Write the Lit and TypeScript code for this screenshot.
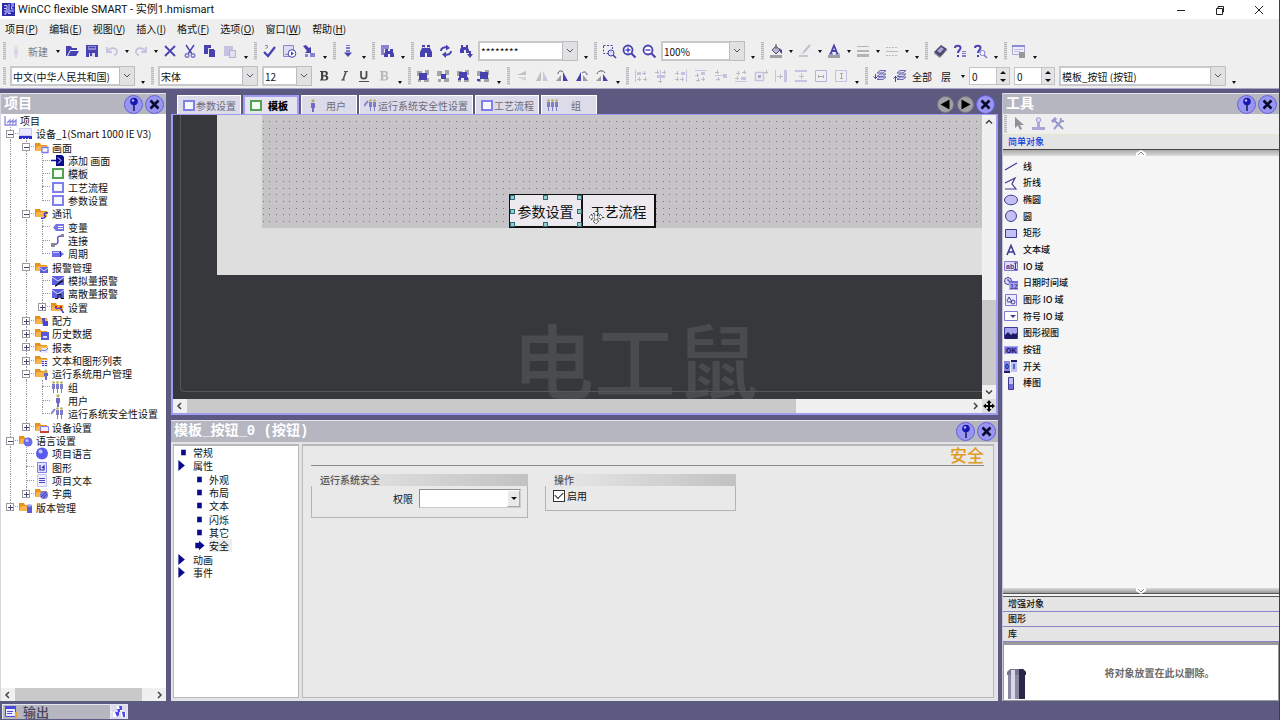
import { LitElement, html, svg, css, nothing } from "lit";
import { customElement, property } from "lit/decorators.js";
import { classMap } from "lit/directives/class-map.js";

const P = "#4842b0";
const D = "#c6c2e0";
const N = "#0a0a8c";

/* ---------- toolbar glyphs, 16 x 16 ---------- */
const binoculars = svg`<path fill=${P} d="M4 2h3v3h2V2h3v3l2 4v5H9v-4H7v4H2V9l2-4z"/><path fill="#fff" d="M4.500 4h2v1h-2zM9.500 4h2v1h-2z"/>`;
const plus = (x: number, y: number) => svg`<path stroke="#bdbbc8" d="M${x - 2} ${y}.5h4M${x}.5 ${y - 2}v4"/>`;
const stack = svg`<g fill="#dcd9f2" stroke="#6c68b4" stroke-width="1"><path d="M5 11.500l3-2.500h6l-3 2.500z"/><path d="M5 8.500l3-2.500h6l-3 2.500z"/><path d="M5 5l3-2.500h6l-3 2.500z"/></g>`;
const group = (a: any) => svg`<path fill="#a5a5a9" d="M2 3h5v5H2zM10 2h4v5h-4zM9 10h5v4H9zM3 11h3v3H3z"/><g fill=${P}>${a}</g>`;

const TB: Record<string, any> = {
  fresh: svg`<circle cx="8" cy="4" r="2" fill="#e9e2cf"/><path fill="#d8d4ea" d="M6 6h4v5H9v4H7v-4H6z"/>`,
  open: svg`<path fill=${P} d="M2 3h5l1 2h5v2H6l-3 6H2z"/><path fill=${P} d="M6.500 8H15l-3 5H4z"/>`,
  save: svg`<path fill=${P} d="M2 2h12v12H2z"/><path fill="#8a86d4" d="M4 3h8v4H4z"/><path fill="#dcdaf2" d="M5 10h6v4H5z"/><path fill=${P} d="M5 4h6v1H5zM6 10h2v3H6z"/>`,
  undo: svg`<path fill="none" stroke=${D} stroke-width="1.800" d="M3 4v5h5M3.500 8.500C6 4 12 4 13 8c.5 2-1 4-3 4"/>`,
  redo: svg`<path fill="none" stroke=${D} stroke-width="1.800" d="M13 4v5H8M12.500 8.500C10 4 4 4 3 8c-.5 2 1 4 3 4"/>`,
  del: svg`<path stroke=${P} stroke-width="1.800" d="M3 3l10 10M13 3L3 13"/>`,
  cut: svg`<path fill="none" stroke=${P} stroke-width="1.400" d="M4 2l6 9M12 2L6 11"/><g fill="none" stroke="#7d7ac6" stroke-width="1.400"><circle cx="5" cy="12.500" r="1.800"/><circle cx="11" cy="12.500" r="1.800"/></g>`,
  copy: svg`<path fill=${P} d="M2 2h7v9H2z"/><path fill=${P} stroke="#efefef" d="M6.500 5.500h5l2 2v7h-7z"/>`,
  paste: svg`<path fill=${D} d="M2 3h9v10H2z"/><path fill="#e2e0f0" stroke="#b5b2c8" d="M7.500 7.500h6v7h-6z"/>`,
  check: svg`<path fill="none" stroke=${P} stroke-width="2.200" d="M3 9l4 4 7-9"/><path fill="none" stroke="#8a88b8" d="M4 2.500h2.500v2L5 5v1"/>`,
  run: svg`<path fill="#dedcf4" stroke="#8a86d4" d="M2.500 2.500h10v11h-10z"/><path stroke="#8a86d4" d="M4 11.500h4"/><circle cx="11" cy="10.500" r="3.800" fill="#fff" stroke=${P}/><path fill=${P} d="M10 8.500l3 2-3 2z"/>`,
  transfer: svg`<path fill=${P} d="M2 3l3-1 3 3 2-1v6H4l2-2z"/><path fill="#8a86d4" d="M9 10h5v4H9zM4 11h3v3H4z"/>`,
  down: svg`<path fill="#7d79cc" d="M6 2h4v1H6zM6 4h4v2H6zM6 7h4v2H6z"/><path fill=${P} d="M4 9.500h8L8 14z"/>`,
  findrep: svg`<path fill="#8a86d4" d="M2 2h8v4H5v6H2z"/><path fill=${P} d="M6 6h3v2h2V6h3v3l1 2v3h-4v-3h-2v3H5v-3l1-2z"/>`,
  find: binoculars,
  refind: svg`<path fill="none" stroke=${P} stroke-width="2" d="M3 8c0-3 3-4 6-3.500M13 8c0 3-3 4-6 3.500"/><path fill=${P} d="M8 1.500L12 5 8 7.500zM8 8.500L4 11.500 8 15z"/>`,
  findnext: svg`<path fill=${P} d="M3 2h2v2h3V2h2v3l1 2v3H8V7H6v3H2V6l1-1z"/><path fill=${P} d="M11 8h2v3h2l-3 4-3-4h2z"/>`,
  zoomrect: svg`<path fill="none" stroke=${P} stroke-dasharray="2 1.500" d="M2.500 2.500h9v8h-9z"/><circle cx="10" cy="10" r="3" fill="#dedcf4" stroke=${P}/><path stroke=${P} stroke-width="1.600" d="M12 12l3 3"/>`,
  zoomin: svg`<circle cx="7" cy="7" r="4.500" fill="#fff" stroke=${P} stroke-width="1.800"/><path stroke=${P} stroke-width="2.200" d="M10.500 10.500l4 4"/><path stroke=${P} stroke-width="1.400" d="M4.500 7h5M7 4.500v5"/>`,
  zoomout: svg`<circle cx="7" cy="7" r="4.500" fill="#fff" stroke=${P} stroke-width="1.800"/><path stroke=${P} stroke-width="2.200" d="M10.500 10.500l4 4"/><path stroke=${P} stroke-width="1.400" d="M4.500 7h5"/>`,
  fill: svg`<path fill="#9f9fa6" d="M2 12h12v3H2z"/><path fill="#b8b6c8" stroke="#55546c" d="M4 7l4-4 4 4-4 4z"/><path fill=${P} d="M11 5l3 2v4l-2-2z"/><path stroke="#55546c" d="M8 1v5"/>`,
  pen: svg`<path fill="#c6c6cc" d="M2 12h9v2H2z"/><path stroke="#c0bed0" stroke-width="2" d="M6 10l7-8"/><path stroke="#dcd9c8" stroke-width="1.500" d="M4 11l3-2"/>`,
  fontcolor: svg`<path fill="#9f9fa6" d="M2 12h12v3H2z"/><path fill="none" stroke=${P} stroke-width="1.800" d="M4.500 11L8 2.500 11.500 11M5.500 8h5"/><path stroke=${P} d="M3 11h4M9.500 11h4"/>`,
  lines: svg`<path fill="#b4b4b8" d="M2 3h12v1H2zM2 7h12v2H2zM2 11h12v3H2z"/>`,
  dashes: svg`<path stroke="#bcbcc0" stroke-dasharray="2 1" d="M2 4.500h12M2 12.500h12"/><path fill="#bcbcc0" d="M2 8h12v1H2z"/>`,
  book: svg`<path fill="#4b486c" d="M2 9l7-7 6 4-7 8z"/><path fill="#a9a6d8" d="M5 8l4-4 3 2-4 4z"/><path fill="none" stroke="#77758e" d="M2 10l6 4.500 7-8"/>`,
  help1: svg`<path fill="none" stroke=${P} stroke-width="2" d="M3 5c0-3 5.500-3 5.500 0C8.500 7 6 7 6 10M6 12v2"/><path fill="#7d79cc" d="M10 8h4v1h-4zM10 10h4v1h-4zM10 12h4v2h-4z"/>`,
  help2: svg`<path fill="none" stroke=${P} stroke-width="2" d="M3 5c0-3 5.500-3 5.500 0C8.500 7 6 7 6 10M6 12v2"/><circle cx="10.500" cy="10" r="2.500" fill="#fff" stroke="#7d79cc"/><path stroke="#7d79cc" stroke-width="1.500" d="M12 12l3 3"/>`,
  props: svg`<path fill="#eef" stroke="#a9a7d4" d="M1.500 2.500h12v9h-12z"/><path fill="#8c89d6" d="M1 2h13v2H1z"/><path stroke="#c0bee4" d="M3 6.500h9M3 8.500h6"/><path fill="#98989c" d="M8 9h6v6H8z"/>`,
  bold: svg`<path fill="#404044" fill-rule="evenodd" d="M4 3h5.500c3 0 3 4 .8 4.600 3 .6 2.700 4.900-.8 4.900H4v-1h1V4H4zM7.200 4.200v3H9c1.200 0 1.200-3 0-3zm0 4.200v3H9c1.600 0 1.600-3 0-3z"/>`,
  italic: svg`<path stroke="#505054" stroke-width="1.600" d="M10 3.500L7 12"/><path stroke="#505054" d="M8 3.500h4M5 12h4"/>`,
  underline: svg`<path fill="none" stroke="#505054" stroke-width="1.800" d="M5 3v5c0 3.500 5.500 3.500 5.500 0V3"/><path stroke="#505054" d="M3 13.500h10"/>`,
  boldoff: svg`<path fill="#b8b8bc" fill-rule="evenodd" d="M4 3h5.500c3 0 3 4 .8 4.600 3 .6 2.700 4.900-.8 4.900H4v-1h1V4H4zM7.200 4.200v3H9c1.200 0 1.200-3 0-3zm0 4.200v3H9c1.600 0 1.600-3 0-3z"/>`,
  front: group(svg`<path d="M4 5h8v7H4z"/>`),
  frontone: group(svg`<path d="M6 6h5v5H6z"/>`),
  back: group(svg`<path d="M4 4h8v6H4zM9 9h4v3H9zM3 10h3v2H3z"/>`),
  backone: group(svg`<path d="M5 4h8v7H5zM2 11h3v2H2z"/>`),
  flipv: svg`<path fill="#c0c0c6" d="M3 7l9-4v4z"/><path fill="#d6d6da" d="M3 9h9v4z"/>`,
  fliph: svg`<path fill="#c0c0c6" d="M7 3v10H2z"/><path fill="#c9c6e2" d="M9 3l5 10H9z"/>`,
  rotr: svg`<path fill="#9a9aa0" d="M2 13l5-6v6z"/><path fill=${P} d="M9 4l5 9H9z"/><path fill="none" stroke="#55546c" d="M4 6c0-3 3-4 5-2"/>`,
  rotl: svg`<path fill=${P} d="M2 13l5-9v9z"/><path fill="#9a9aa0" d="M9 7l5 6H9z"/><path fill="none" stroke="#55546c" d="M13 7c0-3-3-4-5-2"/>`,
  rot180: svg`<path fill="#9a9aa0" d="M2 13l5-5v5z"/><path fill=${P} d="M9 6l5 7H9z"/><path fill="none" stroke="#55546c" d="M3 6c1-4 7-4 8-1"/>`,
  al: svg`<path fill=${D} d="M2 2h1v12H2zM4 4h4v3H4z"/>${plus(11, 5)}${plus(6, 11)}${plus(12, 11)}`,
  ac: svg`<path fill=${D} d="M4 7h8v3H4zM7 2h1v12H7z"/>${plus(4, 4)}${plus(11, 4)}${plus(7, 13)}`,
  ar: svg`<path fill=${D} d="M13 2h1v12h-1zM8 4h4v3H8z"/>${plus(4, 5)}${plus(4, 11)}${plus(9, 11)}`,
  at: svg`<path fill=${D} d="M2 2h12v1H2zM8 4h4v3H8z"/>${plus(4, 7)}${plus(5, 12)}${plus(10, 11)}`,
  am: svg`<path fill=${D} d="M10 6h4v4h-4zM2 7h12v1H2z"/>${plus(4, 4)}${plus(5, 11)}`,
  ab: svg`<path fill=${D} d="M2 13h12v1H2zM8 9h5v3H8z"/>${plus(5, 5)}${plus(11, 4)}${plus(4, 10)}`,
  ctr: svg`<path fill="none" stroke=${D} stroke-width="1.500" d="M2.500 4.500h8v8h-8z"/><path fill="#a9a6d6" d="M5 7h3v3H5z"/>${plus(13, 4)}`,
  dh: svg`<path fill=${D} d="M11 2h3v12h-3zM2 2h1v12H2z"/><path stroke="#bdbbc8" d="M4 8.500h6M7.500 6v5"/>`,
  dv: svg`<path fill=${D} d="M2 2h12v2H2zM2 12h12v2H2z"/><path stroke="#bdbbc8" d="M8.500 5v6M6 8.500h5"/>`,
  sw: svg`<path fill="none" stroke="#b5b2dc" d="M2.500 2.500h11v11h-11z"/><path stroke="#aaa" d="M5 8.500h6M5.500 7v3M10.500 7v3"/>`,
  sh: svg`<path fill="none" stroke="#c4c1e2" d="M2.500 2.500h11v11h-11z"/><path stroke="#aaa" d="M8.500 5v6M7 5.500h3M7 10.500h3"/>`,
  layerup: svg`${stack}<path fill="none" stroke=${P} d="M3.500 6v5M1.500 8.500l2 2 2-2"/>`,
  layerdn: svg`${stack}<path fill="none" stroke=${P} d="M3.500 8v6M1.500 10.500l2-2 2 2"/>`,
  cursor: svg`<path fill="#8f8f96" d="M5 1v11l3-2.500 2 4.500 2-1-2-4h4z"/>`,
  stamp: svg`<path fill="#a9a6d8" d="M2 11h13v3H2zM7 5h3v6H7z"/><circle cx="8.500" cy="4" r="2.300" fill="#dcdaf2" stroke="#a09dd4"/>`,
  tools: svg`<path stroke="#9a97cf" stroke-width="2" d="M4 4l9 9M12 4L4 13"/><path stroke="#9a97cf" stroke-width="3" d="M2 6l4-4"/><path fill="none" stroke="#9a97cf" stroke-width="2" d="M11 2c-1 3 0 4 3 3"/>`,
};

/* ---------- project tree glyphs, 14 x 13 ---------- */
const folder = (a: any) => svg`<path fill="#e8921c" d="M0 2h5l1 2h6v6H0z"/><path fill="#f7b64c" d="M2 5h11l-2 5H0z"/>${a}`;
const person = (x: number) => svg`<circle cx=${x + 1.5} cy="1.500" r="1.300" fill="#b5ae5a"/><path fill="#7f7cc8" d="M${x} 3h3v5h-1v4h-1v-4h-1z"/>`;
const screen = (c: string, f: string) => svg`<path fill=${f} stroke=${c} stroke-width="2" d="M2 2h10v9H2z"/>`;
const mail = svg`<path fill="#5d5de0" d="M1 2h12v9H1z"/><path fill="none" stroke="#dadaff" d="M1 3l6 4 6-4"/>`;
const TREE: Record<string, any> = {
  project: svg`<path fill="none" stroke="#8b89e0" stroke-width="1.300" d="M2 2v9h11V6l-3 3V6L7 9V6l-3 3"/>`,
  device: svg`<path fill="#e9e9ff" stroke="#c9c9f0" d="M.5 1.500h12v7H.5z"/><path fill="#2c2cc8" d="M0 9h13v3H0z"/><path stroke="#fff" d="M3 11.500h1M6 11.500h1M9 11.500h1"/>`,
  fScreen: folder(svg`<path fill="#fff" stroke="#7a7af0" stroke-width="1.300" d="M7 6.500h6v5H7z"/>`),
  add: svg`<path fill=${N} d="M5 1h6l2 2v9H5z"/><path stroke="#fff" fill="none" d="M7 3.500l3 3-3 3"/><path stroke=${N} stroke-width="1.500" d="M0 6.500h7"/>`,
  template: screen("#55a055", "#f3fff3"),
  screen: screen("#8080ea", "#f7f7ff"),
  fComm: folder(svg`<path fill="none" stroke="#3333cc" stroke-width="1.500" d="M13 6c-4-1-4 2-3 3s-1 3-4 2"/>`),
  tag: svg`<path fill="#7474e6" d="M5 3h8v7H5L2 6.500z"/><path stroke="#fff" d="M7 5.500h5M7 7.500h5"/>`,
  conn: svg`<path fill="none" stroke="#4c4cd0" stroke-width="1.400" d="M10 2C5 2 7 5 7 7s-1 4-4 3"/><path fill="#888" d="M10 0h3v3h-3zM0 9h4v4H0z"/>`,
  cycle: svg`<path fill="#6d6de8" d="M1 4h8l4 3-4 3H1z"/><path stroke="#c9c9ff" d="M2 5.500h6"/><path stroke="#2a2ab4" d="M9.500 4v6"/>`,
  fAlarm: folder(svg`<path fill="#5d5de0" d="M5 6h8v6H5z"/><path fill="none" stroke="#dadaff" d="M5 7l4 3 4-3"/>`),
  analog: svg`${mail}<path fill="none" stroke="#111" stroke-width="1.300" d="M4 12c3 0 4-5 8-5"/>`,
  discrete: svg`${mail}<path fill="none" stroke="#111" d="M4 11.500h3v-4h3v4h3"/>`,
  fSet: folder(svg`<path fill="none" stroke="#4444cc" stroke-width="1.400" d="M4 6c2 4 4-1 6 2s1 4 3 3"/><path fill="#c22" d="M4 5h2v2H4zM9 5h2v2H9z"/>`),
  fRecipe: folder(svg`<path fill="#4848d4" d="M7 4h3v3h3v5H8z"/>`),
  fHist: folder(svg`<path fill="#5858dc" d="M6 5h8v8H6z"/><path fill="#dadaff" d="M8 9h4v2H8z"/>`),
  fReport: folder(svg`<path fill="#e9e9ff" d="M6 7h7v5H6z"/><path stroke="#5858dc" fill="none" d="M5 11c2-5 4 2 8-4"/>`),
  fText: folder(svg`<path fill="#e9e9ff" d="M7 6h6v7H7z"/><path stroke="#3a3ac4" stroke-dasharray="2 1" d="M7 7.500h6M7 9.500h5M7 11.500h6"/>`),
  fUser: folder(svg`<circle cx="11" cy="4" r="1.400" fill="#b5ae5a"/><path fill="#6a67c8" d="M9 6h4v3h-1v4h-2V9H9z"/>`),
  users: svg`${person(1)}${person(5)}${person(9)}`,
  user: svg`<circle cx="7" cy="1.800" r="1.600" fill="#b5ae5a"/><path fill="#6f6cc6" d="M5 4h4v5H8v4H6V9H5z"/>`,
  security: svg`<path stroke="#7f7cc8" stroke-width="2" d="M0 7l4-5"/>${person(5)}${person(9)}`,
  fDevice: folder(svg`<path fill="#f2eaff" stroke="#8080ea" d="M5.500 5.500h8v5h-8z"/><path fill="#c43" d="M5 10h9v2H5z"/>`),
  fLang: folder(svg`<circle cx="9" cy="8" r="4.500" fill="#6a6aee"/><circle cx="8" cy="6.500" r="1.500" fill="#c4c4ff"/>`),
  globe: svg`<circle cx="7" cy="6.500" r="6" fill="#5a5aea"/><circle cx="5.500" cy="4.500" r="2" fill="#c4c4ff"/>`,
  graphic: svg`<path fill="#e4e4ff" stroke="#8080ea" d="M2.500 1.500h9v10h-9z"/><path fill="none" stroke="#2d2dbb" stroke-width="1.200" d="M5 4v5h4V5L7 7"/>`,
  textdoc: svg`<path fill="#eeeeff" stroke="#c4c4ee" d="M2.500 .5h9v12h-9z"/><path stroke="#4646d0" d="M4 4.500h6M4 6.500h6M4 8.500h6"/>`,
  fDict: folder(svg`<circle cx="9" cy="8" r="4" fill="#7a7ad8"/><path stroke="#3a3ac4" d="M6 10l5-5M8 11l4-4"/>`),
  fVersion: folder(svg`<path fill="#5c5cd8" d="M8 4h5v8H8z"/><ellipse cx="10.500" cy="4.500" rx="2.500" ry="1.200" fill="#a4a4f4"/>`),
};

/* ---------- toolbox glyphs, 14 x 14 ---------- */
const L = "#c3bff2";
const V = "#3f3a92";
const TOOL: Record<string, any> = {
  line: svg`<path stroke=${V} stroke-width="1.200" d="M1 11L13 4"/>`,
  poly: svg`<path fill="none" stroke=${V} stroke-width="1.200" d="M1 7l10-5-3 6 4 5H1"/>`,
  ellipse: svg`<ellipse cx="7" cy="7" rx="6.500" ry="4.800" fill=${L} stroke=${V}/>`,
  circle: svg`<circle cx="7" cy="7" r="5.500" fill=${L} stroke=${V}/>`,
  rect: svg`<path fill=${L} stroke=${V} d="M1.500 3.500h11v8h-11z"/>`,
  text: svg`<path fill="none" stroke=${V} stroke-width="1.600" d="M3 12L7 2.500 11 12M4.500 9h5"/>`,
  io: svg`<path fill="#dedcfa" stroke="#7d79d4" d="M.5 2.500h13v9H.5z"/><text class="gl" x="2" y="10" fill=${V}>ab</text><path stroke=${V} fill="none" d="M10 4h3M10 10.500h3M11.500 4v6"/>`,
  date: svg`<circle cx="4" cy="5" r="3.500" fill="#dedcfa" stroke=${V}/><path fill="none" stroke=${V} d="M4 3v2h2"/><path fill="#aaa6f0" d="M5 6h9v8H5z"/><path fill="#6f6be0" d="M5 5h9v2H5z"/><text class="gl" x="6" y="13" fill=${V}>12</text>`,
  gio: svg`<path fill="#eceafd" stroke="#7d79d4" d="M1.500 1.500h11v11h-11z"/><path fill="none" stroke=${V} d="M3 8l2-4 3 5H3M11 9a2 2 0 1 1-4 0 2 2 0 0 1 4 0"/>`,
  sio: svg`<path fill="#fff" stroke="#7d79d4" d="M.5 2.500h13v9H.5z"/><path fill=${V} d="M6 6h6l-3 3z"/>`,
  view: svg`<path fill="#aaa6ee" stroke=${V} d="M.5 1.500h13v11H.5z"/><path fill="#1e1a66" d="M1 9l3-3 3 3 2-2 2 1 2-1v6H1z"/>`,
  button: svg`<path fill="#7470e2" d="M0 3h14v8H0z"/><path fill="none" stroke="#a9a6f4" d="M.5 3.500h13v7H.5z"/><text class="gl" x="2" y="10" fill="#16124e">OK</text>`,
  sw: svg`<path fill="#8a86ee" d="M0 2h6v11H0z"/><path fill=${L} d="M7 3h6v10H7z"/><path fill="#1e1a66" d="M7 1h6v2H7zM0 12h6v2H0z"/><text class="gl" x="1" y="10" fill="#16124e">0</text><text class="gl" x="9" y="10" fill="#16124e">I</text>`,
  bar: svg`<path fill=${L} stroke=${V} d="M4.500 1.500h5v12h-5z"/><path fill="#6f6be0" d="M5 8h4v5H5z"/>`,
};

const MENU = [
  ["项目", "P"], ["编辑", "E"], ["视图", "V"], ["插入", "I"],
  ["格式", "F"], ["选项", "O"], ["窗口", "W"], ["帮助", "H"],
];

type Tool = string;
/* "|" grip, "." overflow, trailing "v" after ":" adds a drop arrow */
const ROW1A: Tool[] = ["open", "save", "undo:v", "redo:v", "del", "cut", "copy", "paste", ".", "|", "check", "run", "transfer", ".", "|", "down", ".", "|", "findrep", ".", "|", "find", "refind", "findnext"];
const ROW1B: Tool[] = [".", "|", "zoomrect", "zoomin", "zoomout"];
const ROW1C: Tool[] = [".", "|", "fill:v", "pen:v", "fontcolor:v", "lines:v", "dashes:v", ".", "|", "book", "help1", "help2", ".", "|", "props", "."];
const ROW2: Tool[] = ["bold", "italic", "underline", "boldoff", ".", "|", "front", "frontone", "back", "backone", ".", "|", "flipv", "fliph", "rotr", "rotl", "rot180", ".", "|", "al", "ac", "ar", "at", "am", "ab", "ctr", "dh", "dv", "sw", "sh", ".", "|", "layerup", "layerdn"];

interface Node { d: number; t: string; i: string; x?: "+" | "-"; sel?: boolean; }
const NODES: Node[] = [
  { d: 0, t: "项目", i: "project" },
  { d: 1, t: "设备_1(Smart 1000 IE V3)", i: "device", x: "-" },
  { d: 2, t: "画面", i: "fScreen", x: "-" },
  { d: 3, t: "添加 画面", i: "add" },
  { d: 3, t: "模板", i: "template", sel: true },
  { d: 3, t: "工艺流程", i: "screen" },
  { d: 3, t: "参数设置", i: "screen" },
  { d: 2, t: "通讯", i: "fComm", x: "-" },
  { d: 3, t: "变量", i: "tag" },
  { d: 3, t: "连接", i: "conn" },
  { d: 3, t: "周期", i: "cycle" },
  { d: 2, t: "报警管理", i: "fAlarm", x: "-" },
  { d: 3, t: "模拟量报警", i: "analog" },
  { d: 3, t: "离散量报警", i: "discrete" },
  { d: 3, t: "设置", i: "fSet", x: "+" },
  { d: 2, t: "配方", i: "fRecipe", x: "+" },
  { d: 2, t: "历史数据", i: "fHist", x: "+" },
  { d: 2, t: "报表", i: "fReport", x: "+" },
  { d: 2, t: "文本和图形列表", i: "fText", x: "+" },
  { d: 2, t: "运行系统用户管理", i: "fUser", x: "-" },
  { d: 3, t: "组", i: "users" },
  { d: 3, t: "用户", i: "user" },
  { d: 3, t: "运行系统安全性设置", i: "security" },
  { d: 2, t: "设备设置", i: "fDevice", x: "+" },
  { d: 1, t: "语言设置", i: "fLang", x: "-" },
  { d: 2, t: "项目语言", i: "globe" },
  { d: 2, t: "图形", i: "graphic" },
  { d: 2, t: "项目文本", i: "textdoc" },
  { d: 2, t: "字典", i: "fDict", x: "+" },
  { d: 1, t: "版本管理", i: "fVersion", x: "+" },
];

const TABS = [
  { t: "参数设置", i: "screen" },
  { t: "模板", i: "template", on: true },
  { t: "用户", i: "user" },
  { t: "运行系统安全性设置", i: "security" },
  { t: "工艺流程", i: "screen" },
  { t: "组", i: "users" },
];

const TOOLS = [
  ["线", "line"], ["折线", "poly"], ["椭圆", "ellipse"], ["圆", "circle"], ["矩形", "rect"],
  ["文本域", "text"], ["IO 域", "io"], ["日期时间域", "date"], ["图形 IO 域", "gio"],
  ["符号 IO 域", "sio"], ["图形视图", "view"], ["按钮", "button"], ["开关", "sw"], ["棒图", "bar"],
];

const PROPS = [
  { t: "常规", m: "square" }, { t: "属性", m: "tri" },
  { t: "外观", m: "square", sub: true }, { t: "布局", m: "square", sub: true },
  { t: "文本", m: "square", sub: true }, { t: "闪烁", m: "square", sub: true },
  { t: "其它", m: "square", sub: true }, { t: "安全", m: "arrow", sub: true, sel: true },
  { t: "动画", m: "tri" }, { t: "事件", m: "tri" },
];
const MARK: Record<string, any> = {
  square: svg`<path fill=${N} d="M5 4h5v6H5z"/>`,
  tri: svg`<path fill=${N} d="M2 1l7 6-7 6z"/>`,
  arrow: svg`<path fill=${N} d="M3 4h4V2l6 5-6 5v-2H3z"/>`,
};

const reset = css`
  * { box-sizing: border-box; }
  button, select, input { font: inherit; color: inherit; margin: 0; padding: 0; border: 0; background: none; border-radius: 0; }
  svg { display: block; flex: none; }
  ul { list-style: none; margin: 0; padding: 0; }
`;

@customElement("round-button")
export class RoundButton extends LitElement {
  @property() kind = "close";
  @property() label = "";
  static styles = [reset, css`
    :host { display: block; }
    button { display: block; }
  `];
  render() {
    const k = this.kind;
    const nav = k === "prev" || k === "next";
    return html`<button type="button" aria-label=${this.label}>
      <svg width="19" height="19" viewBox="0 0 19 19">
        <circle cx="9.500" cy="9.500" r=${nav ? 8 : 9} fill=${nav ? "#a2a2a6" : "#9896f2"} stroke=${nav ? "#77777c" : "#6461d8"}/>
        ${k === "pin" ? svg`<path stroke="#1a1a50" stroke-width="1.500" d="M10 9v7"/><circle cx="10" cy="6.500" r="3.800" fill="#1616b0"/><circle cx="9" cy="5.500" r="1.200" fill="#b9b9ff"/>` : nothing}
        ${k === "close" ? svg`<path stroke="#08082c" stroke-width="2.600" d="M5.500 5.500l8 8M13.500 5.500l-8 8"/>` : nothing}
        ${k === "prev" ? svg`<path d="M13.500 4.500v10l-9-5z"/>` : nothing}
        ${k === "next" ? svg`<path d="M5.500 4.500v10l9-5z"/>` : nothing}
      </svg>
    </button>`;
  }
}

@customElement("app-root")
export class AppRoot extends LitElement {
  static styles = [reset, css`
    :host {
      display: flex; flex-direction: column; height: 100vh; overflow: hidden;
      background: #5c5a80; color: #111; border-right: 1px solid #3c3b50; border-bottom: 1px solid #15152c;
      font: 10px/13px "Noto Sans CJK SC", sans-serif;
    }
    .title { display: flex; align-items: center; height: 19px; background: #fff; gap: 3px; padding: 0 1px 0 2px; }
    .title h1 { flex: 1; margin: 0; font: 11px/19px Roboto, "Noto Sans CJK SC", sans-serif; }
    .title button { width: 39px; height: 19px; display: grid; place-items: center; }
    .menu { display: flex; height: 19px; padding-left: 5px; gap: 11px; align-items: center; background: #eee; }
    .bars { background: #efefef; border-bottom: 1px solid #a9a7c8; }
    .bar { display: flex; align-items: center; height: 26px; }
    .bar + .bar { height: 24px; }
    .ib { width: 20px; height: 20px; display: grid; place-items: center; flex: none; }
    .new { width: 45px; display: flex; align-items: center; gap: 4px; color: #777; flex: none; }
    .drop { width: 9px; height: 20px; display: grid; place-items: center; flex: none; }
    .drop::after, .more::after { content: ""; border: 2px solid transparent; border-top: 3px solid #111; border-bottom: 0; }
    .more { width: 11px; height: 20px; display: grid; place-items: end center; padding-bottom: 2px; flex: none; }
    .grip { width: 8px; height: 18px; flex: none; display: flex; justify-content: center; }
    .grip::after { content: ""; width: 3px; background: repeating-linear-gradient(#b9b9bd 0 1px, #dcdcde 1px 2px); }
    .tl { width: 24px; height: 20px; text-align: center; flex: none; }
    .combo { display: grid; margin: 0 2px; height: 20px; flex: none; }
    .combo > * { grid-area: 1 / 1; }
    .combo select { appearance: none; background: #fff; border: 2px solid #c9c9cb; padding-left: 1px; width: 100%; height: 20px; }
    .combo .chev { justify-self: end; width: 16px; height: 20px; background: #e1e1e3; border: 1px solid #bdbdc0; display: grid; place-items: center; pointer-events: none; }
    .w125 { width: 125px; } .w100 { width: 100px; } .w84 { width: 84px; } .w50 { width: 50px; } .w167 { width: 167px; }
    .spin { display: flex; width: 41px; height: 18px; margin: 0 2px; border: 1px solid #c4c4c6; background: #fff; flex: none; }
    .spin input { flex: 1; min-width: 0; padding-left: 2px; }
    .spin div { display: flex; flex-direction: column; width: 13px; background: #e4e4e6; border-left: 1px solid #c4c4c6; }
    .spin button { flex: 1; display: grid; place-items: center; }
    .up::after { content: ""; border: 3px solid transparent; border-bottom: 3px solid #111; border-top: 0; }
    .dn::after { content: ""; border: 3px solid transparent; border-top: 3px solid #111; border-bottom: 0; }

    .main { flex: 1; min-height: 0; display: grid; grid-template-columns: 166px minmax(0, 1fr) 277px; column-gap: 4px; padding: 4px 0 2px; }
    .side, .tools, .center, .editor, .inspector { display: flex; flex-direction: column; min-height: 0; min-width: 0; }
    .head { display: flex; align-items: center; height: 21px; flex: none; background: #b6b6c1; border-top: 1px solid #e4e4ea; padding: 0 2px 0 3px; gap: 2px; color: #fff; }
    .head h2 { flex: 1; margin: 0; font: bold 14px/19px "Liberation Mono", "Noto Sans CJK SC", monospace; }

    .side { background: #fff; border-left: 1px solid #d6d6dc; }
    .tree { flex: 1; overflow: hidden; padding-left: 1px; }
    .node { display: flex; height: 13px; white-space: nowrap; align-items: center; }
    .node:nth-child(3n) { height: 14px; }
    .g { width: 16px; align-self: stretch; flex: none; display: grid; grid-template: 1fr 1fr / 1fr 1fr; }
    .g > * { grid-area: 1 / 1 / 3 / 3; }
    .g .v { border-left: 1px dotted #999; margin-left: 8px; }
    .g .half { grid-area: 1 / 1 / 2 / 3; }
    .g .h { border-top: 1px dotted #999; margin: 6px 0 0 8px; }
    .exp { width: 8px; height: 8px; place-self: center; border: 1px solid #9a9a9e; background: #fff; display: grid; place-items: center; }
    .ti { width: 18px; display: grid; place-items: center start; padding-left: 1px; flex: none; }
    .sel { background: #ededed; }
    .sb { display: flex; align-items: center; height: 13px; background: #f0f0f0; flex: none; }
    .sb button { width: 14px; height: 13px; display: grid; place-items: center; flex: none; }
    .sb .track { flex: 1; align-self: stretch; display: flex; }
    .sb .thumb { background: #c9c9ca; }
    .t93 { flex: 0 0 93%; } .t78 { flex: 0 0 78%; }

    .editor { height: 322px; flex: none; }
    .tabs { display: flex; height: 21px; align-items: flex-end; gap: 2px; padding-left: 7px; flex: none; }
    .tab { display: flex; align-items: center; height: 19px; min-width: 56px; padding: 0 4px; border: 1px solid #fff; border-bottom: 0; background: #dcdbe9; color: #6c6c7c; }
    .tab span { flex: 1; text-align: center; white-space: nowrap; }
    .tab.on { color: #000; font-weight: 900; background: #e4e3ee; border: 2px solid #9f9cf2; border-bottom: 0; }
    .nav { margin-left: auto; display: flex; gap: 1px; padding-right: 3px; }
    .frame { flex: 1; min-height: 0; border: 2px solid #9f9cf2; border-top-width: 1px; margin-left: 1px; display: grid; grid-template: minmax(0, 1fr) 14px / minmax(0, 1fr) 14px; background: #f0f0f0; }
    .frame .sb { height: 14px; }
    .canvas { position: relative; overflow: hidden; background: #37383c; }
    .guide { position: absolute; left: 7px; right: -10px; top: -10px; bottom: 7px; border: 1px solid #55565a; border-radius: 4px; }
    .surface { position: absolute; left: 44px; right: 0; top: 0; height: 160px; background: #dedede; }
    .dots { position: absolute; left: 45px; top: 0; right: 0; height: 113px; }
    .dots svg { width: 100%; height: 100%; }
    .mark { position: absolute; left: 339px; top: 203px; font-size: 82px; line-height: 80px; font-weight: 500; color: #4a4b4f; white-space: nowrap; }
    .hb { position: absolute; top: 79px; height: 34px; width: 74px; background: #eceaee; border: 1px solid #111; border-right-width: 2px; border-bottom-width: 2px; font-size: 14px; line-height: 30px; text-align: center; }
    .b1 { left: 336px; } .b2 { left: 409px; }
    .handles { position: absolute; left: 336px; top: 79px; }
    .move { position: absolute; left: 415px; top: 95px; }
    .vsb { display: flex; flex-direction: column; background: #f0f0f0; }
    .vsb button { height: 14px; display: grid; place-items: center; flex: none; }
    .vsb .space { flex: 2; } .vsb .vthumb { flex: 1; background: #c9c9ca; }
    .corner { display: grid; place-items: center; background: #ddd; }

    .inspector { flex: 1; margin: 5px 0 0 1px; background: #d5d5dc; }
    .inspector .head { height: 22px; }
    .body { flex: 1; min-height: 0; display: grid; grid-template-columns: 126px minmax(0, 1fr); gap: 3px; padding: 2px 4px 3px 2px; background: #e3e3e5; }
    .plist { background: #fff; border: 1px solid #b8b8bc; border-top-width: 2px; padding-left: 2px; }
    .prow { display: flex; align-items: center; height: 13px; }
    .prow:nth-child(3n) { height: 14px; }
    .prow.sub { padding-left: 16px; }
    .prow button { display: flex; align-items: center; gap: 3px; height: 13px; }
    .prow .sel { padding-right: 3px; }
    .pane { background: #e9e9e9; border: 1px solid #b8b8bc; border-top-width: 2px; padding: 0 9px 0 8px; }
    .pane h3 { margin: 0; height: 20px; border-bottom: 1px solid #8c8c90; text-align: right; font: 500 17px/18px "Noto Sans CJK SC", sans-serif; color: #e09a1e; }
    .groups { display: flex; align-items: flex-start; gap: 17px; padding-top: 8px; }
    fieldset { margin: 0; padding: 0; border: 1px solid #b4b4b6; border-top: 0; min-width: 0; }
    .gt { height: 12px; padding-left: 9px; margin-right: -1px; margin-left: -1px; line-height: 12px; color: #555; background: linear-gradient(90deg, #e9e9e9, #c2c2c2); font-weight: 500; }
    .g1 { width: 217px; height: 44px; } .g2 { width: 191px; height: 37px; }
    .f1 { display: flex; align-items: center; justify-content: flex-end; gap: 6px; padding: 3px 6px 0 0; }
    .pick { display: grid; width: 102px; height: 19px; }
    .pick > * { grid-area: 1 / 1; }
    .pick select { appearance: none; background: #fff; border: 1px solid #8e8e92; border-right-color: #ccc; border-bottom-color: #ccc; height: 19px; }
    .pick i { justify-self: end; align-self: center; width: 13px; height: 17px; margin-right: 1px; background: #e9e9e9; border: 1px solid #aaa; border-top-color: #fff; border-left-color: #fff; pointer-events: none; display: grid; place-items: center; }
    .f2 { display: flex; align-items: center; gap: 2px; padding: 3px 0 0 7px; }
    .f2 input { appearance: none; width: 12px; height: 12px; border: 1px solid #333; background: #fff; display: grid; place-items: center; }
    .f2 input:checked::after { content: ""; width: 7px; height: 4px; border: solid #222; border-width: 0 0 1px 1px; transform: translateY(-1px) rotate(-45deg); }

    .tools { background: #f5f5f5; border-left: 1px solid #c5c4d4; }
    .tbar { display: flex; align-items: center; height: 21px; background: #efefef; border-bottom: 1px solid #e4e8c8; flex: none; }
    .tbar .grip { width: 5px; }
    .acc { display: block; width: 100%; text-align: left; height: 15px; padding-left: 5px; font: 500 9px/14px "Noto Sans CJK SC", sans-serif; background: #e4e4e4; border-bottom: 1px solid #8885c4; flex: none; }
    .acc.open { color: #1040e0; border-bottom: 1px solid #444; }
    .edge { height: 6px; background: linear-gradient(#aaa, #dcdcdc); display: grid; place-items: center; flex: none; }
    .edge.low { background: linear-gradient(#dcdcdc, #999); border-bottom: 1px solid #555; }
    .tlist { flex: 1; padding-top: 2px; }
    .tlist li { display: flex; height: 17px; align-items: center; }
    .tlist li:nth-child(3n + 1) { height: 16px; }
    .tlist button { display: flex; align-items: center; gap: 5px; padding-left: 1px; font-size: 9px; font-weight: 500; height: 16px; }
    .gl { font: bold 7px "Liberation Sans", sans-serif; }
    .accs { border-top: 1px solid #555; margin-top: 2px; flex: none; }
    .bin { display: flex; align-items: flex-end; height: 59px; background: #fff; border: 1px solid #9a9a9e; border-top: 3px solid #9a9a9e; flex: none; padding: 0 3px 1px; }
    .bin p { flex: 1; align-self: center; margin: 0; text-align: center; font-weight: bold; color: #6a6a6a; padding-left: 18px; }

    .status { height: 17px; flex: none; display: flex; align-items: center; padding: 0 0 0 2px; }
    .out { display: flex; align-items: center; width: 109px; height: 15px; gap: 6px; padding-left: 2px; background: #b6b6c1; border: 1px solid #e6e6ee; border-bottom: 0; font: 500 13px/14px "Noto Sans CJK SC", sans-serif; color: #44445c; }
    .cubes { width: 17px; height: 15px; background: #dcdcec; border: 1px solid #e6e6ee; border-bottom: 0; display: grid; place-items: center; }
  `];

  private tool(t: Tool) {
    if (t === "|") return html`<span class="grip"></span>`;
    if (t === ".") return html`<button class="more" aria-label="更多"></button>`;
    const [name, drop] = t.split(":");
    return html`<button class="ib" aria-label=${name}><svg width="16" height="16" viewBox="0 0 16 16">${TB[name]}</svg></button>${drop ? html`<button class="drop" aria-label=${name + " 选项"}></button>` : nothing}`;
  }

  private combo(label: string, value: string, cls: string) {
    return html`<span class="combo ${cls}">
      <select aria-label=${label}><option>${value}</option></select>
      <span class="chev"><svg width="8" height="6" viewBox="0 0 8 6"><path fill="none" stroke="#555" d="M1 1l3 3 3-3"/></svg></span>
    </span>`;
  }

  private spin(label: string) {
    return html`<span class="spin"><input aria-label=${label} value="0"><div><button class="up" aria-label="增加"></button><button class="dn" aria-label="减少"></button></div></span>`;
  }

  private guides(i: number) {
    const n = NODES[i];
    const cells = [];
    for (let k = 1; k <= n.d; k++) {
      let more = false;
      for (let j = i + 1; j < NODES.length && NODES[j].d >= k; j++) if (NODES[j].d === k) { more = true; break; }
      const own = k === n.d;
      cells.push(html`<span class="g">
        ${more || own ? html`<span class=${classMap({ v: true, half: own && !more })}></span>` : nothing}
        ${own ? html`<span class="h"></span>` : nothing}
        ${own && n.x ? html`<button class="exp" aria-label=${n.x === "+" ? "展开" : "折叠"}><svg width="6" height="6" viewBox="0 0 6 6"><path stroke="#44446c" d=${n.x === "+" ? "M1 3.500h5M3.500 1v5" : "M1 3.500h5"}/></svg></button>` : nothing}
      </span>`);
    }
    return cells;
  }

  private arrow(dir: string) {
    const d: Record<string, string> = { l: "M5 1L2 4l3 3", r: "M3 1l3 3-3 3", u: "M1 5.500l3-3 3 3", d: "M1 2.500l3 3 3-3" };
    return html`<svg width="8" height="8" viewBox="0 0 8 8"><path fill="none" stroke="#444" stroke-width="1.500" d=${d[dir]}/></svg>`;
  }

  render() {
    const pts: number[][] = [];
    for (const x of [1, 7, 14]) for (const y of [6, 13, 19]) pts.push([x, y]);
    return html`
      <header>
        <div class="title">
          <svg width="13" height="13" viewBox="0 0 13 13"><path fill="#2b2ba8" d="M0 0h13v13H0z"/><path fill="none" stroke="#c9c9ff" d="M2 2.500h3v3H2M7 1v5M9.500 2v4h2M2 8h2v3H2M6 8h6M6 10.500h3"/><path fill="#8585ee" d="M9 0h3v4H9zM4 6h4v4H4z"/></svg>
          <h1>WinCC flexible SMART - 实例1.hmismart</h1>
          <div class="bar">
            <button aria-label="最小化"><svg width="10" height="10" viewBox="0 0 10 10"><path stroke="#222" d="M1 5.500h8"/></svg></button>
            <button aria-label="还原"><svg width="10" height="10" viewBox="0 0 10 10"><path fill="none" stroke="#222" d="M1.500 3.500h6v6h-6zM3 3V1.500h5.500V7H8"/></svg></button>
            <button aria-label="关闭"><svg width="10" height="10" viewBox="0 0 10 10"><path stroke="#222" d="M1 1l8 8M9 1L1 9"/></svg></button>
          </div>
        </div>
        <nav class="menu">${MENU.map(([t, k]) => html`<button>${t}(<u>${k}</u>)</button>`)}</nav>
        <div class="bars">
          <div class="bar">
            <span class="grip"></span>
            <button class="new"><svg width="16" height="16" viewBox="0 0 16 16">${TB.fresh}</svg>新建</button>
            <button class="drop" aria-label="新建选项"></button>
            ${ROW1A.map((t) => this.tool(t))}
            ${this.combo("查找", "********", "w100")}
            ${ROW1B.map((t) => this.tool(t))}
            ${this.combo("缩放", "100%", "w84")}
            ${ROW1C.map((t) => this.tool(t))}
          </div>
          <div class="bar">
            <span class="grip"></span>
            ${this.combo("语言", "中文(中华人民共和国)", "w125")}
            ${this.tool(".")}${this.tool("|")}
            ${this.combo("字体", "宋体", "w100")}
            ${this.combo("字号", "12", "w50")}
            ${ROW2.map((t) => this.tool(t))}
            <button class="tl">全部</button><button class="tl">层</button><button class="drop" aria-label="层选项"></button>
            ${this.spin("层起始")}${this.spin("层结束")}
            ${this.combo("对象", "模板_按钮 (按钮)", "w167")}
            ${this.tool(".")}
          </div>
        </div>
      </header>

      <main class="main">
        <aside class="side">
          <div class="head"><h2>项目</h2><round-button kind="pin" label="固定"></round-button><round-button label="关闭"></round-button></div>
          <ul class="tree" role="tree">
            ${NODES.map((n, i) => html`<li class="node" role="treeitem" aria-level=${n.d + 1}>
              ${this.guides(i)}
              <span class="ti"><svg width="14" height="13" viewBox="0 0 14 13">${TREE[n.i]}</svg></span>
              <span class=${classMap({ sel: !!n.sel })}>${n.t}</span>
            </li>`)}
          </ul>
          <div class="sb"><button aria-label="向左">${this.arrow("l")}</button><div class="track"><span class="thumb t93"></span></div><button aria-label="向右">${this.arrow("r")}</button></div>
        </aside>

        <section class="center">
          <div class="editor">
            <div class="tabs">
              ${TABS.map((t) => html`<button class=${classMap({ tab: true, on: !!t.on })}><svg width="14" height="13" viewBox="0 0 14 13">${TREE[t.i]}</svg><span>${t.t}</span></button>`)}
              <div class="nav"><round-button kind="prev" label="上一个"></round-button><round-button kind="next" label="下一个"></round-button><round-button label="关闭"></round-button></div>
            </div>
            <div class="frame">
              <div class="canvas">
                <div class="mark">电工鼠</div>
                <div class="guide"></div>
                <div class="surface">
                  <div class="dots"><svg>
                    <defs><pattern id="dot" width="20" height="20" patternUnits="userSpaceOnUse">${pts.map(([x, y]) => svg`<rect x=${x} y=${y} width="1" height="1" fill="#767478"/>`)}</pattern></defs>
                    <rect width="100%" height="100%" fill="#c6c4c7"/><rect width="100%" height="100%" fill="url(#dot)"/>
                  </svg></div>
                </div>
                <button class="hb b1">参数设置</button>
                <button class="hb b2">工艺流程</button>
                <svg class="handles" width="74" height="34" viewBox="0 0 74 34">
                  ${[[1, 1], [34, 1], [68, 1], [1, 15], [68, 15], [1, 28], [34, 28], [68, 28]].map(([x, y]) => svg`<rect x=${x + 0.5} y=${y + 0.5} width="4" height="4" fill="#93d0cf" stroke="#2d6b78"/>`)}
                </svg>
                <svg class="move" width="16" height="14" viewBox="0 0 16 14"><path fill="#fff" stroke="#333" stroke-dasharray="1.500 1" d="M8 1l3 3H9v2h3V4l3 3-3 3V8H9v3h2l-3 3-3-3h2V8H4v2L1 7l3-3v2h3V4H5z"/></svg>
              </div>
              <div class="vsb"><button aria-label="向上">${this.arrow("u")}</button><span class="space"></span><span class="vthumb"></span><button aria-label="向下">${this.arrow("d")}</button></div>
              <div class="sb"><button aria-label="向左">${this.arrow("l")}</button><div class="track"><span class="thumb t78"></span></div><button aria-label="向右">${this.arrow("r")}</button></div>
              <div class="corner"><svg width="12" height="12" viewBox="0 0 12 12"><path d="M6 0l2.500 3H7v2h2V3.500L12 6 9 8.500V7H7v2h1.500L6 12 3.500 9H5V7H3v1.500L0 6l3-2.500V5h2V3H3.500z"/></svg></div>
            </div>
          </div>

          <div class="inspector">
            <div class="head"><h2>模板_按钮_0 (按钮)</h2><round-button kind="pin" label="固定"></round-button><round-button label="关闭"></round-button></div>
            <div class="body">
              <ul class="plist">
                ${PROPS.map((p) => html`<li class=${classMap({ prow: true, sub: !!p.sub })}><button><svg width="14" height="13" viewBox="0 0 14 14">${MARK[p.m]}</svg><span class=${classMap({ sel: !!p.sel })}>${p.t}</span></button></li>`)}
              </ul>
              <div class="pane">
                <h3>安全</h3>
                <div class="groups">
                  <fieldset class="g1" aria-label="运行系统安全">
                    <div class="gt">运行系统安全</div>
                    <div class="f1"><label for="perm">权限</label>
                      <span class="pick"><select id="perm"><option></option></select><i class="dn"></i></span></div>
                  </fieldset>
                  <fieldset class="g2" aria-label="操作">
                    <div class="gt">操作</div>
                    <div class="f2"><input id="en" type="checkbox" checked><label for="en">启用</label></div>
                  </fieldset>
                </div>
              </div>
            </div>
          </div>
        </section>

        <aside class="tools">
          <div class="head"><h2>工具</h2><round-button kind="pin" label="固定"></round-button><round-button label="关闭"></round-button></div>
          <div class="tbar">${["|", "cursor", "stamp", "tools"].map((t) => this.tool(t))}</div>
          <button class="acc open">简单对象</button>
          <div class="edge"><svg width="10" height="6" viewBox="0 0 10 6"><path fill="#fff" d="M0 6V3l5-3 5 3v3z"/><path fill="none" stroke="#888" d="M2 5l3-3 3 3"/></svg></div>
          <ul class="tlist">${TOOLS.map(([t, i]) => html`<li><button><svg width="14" height="14" viewBox="0 0 14 14">${TOOL[i]}</svg>${t}</button></li>`)}</ul>
          <div class="edge low"><svg width="10" height="6" viewBox="0 0 10 6"><path fill="#fff" d="M0 0v3l5 3 5-3V0z"/><path fill="none" stroke="#888" d="M2 1l3 3 3-3"/></svg></div>
          <div class="accs">${["增强对象", "图形", "库"].map((t) => html`<button class="acc">${t}</button>`)}</div>
          <div class="bin">
            <svg width="19" height="30" viewBox="0 0 19 30"><path fill="#8a88a4" d="M1 5h17v25H1z"/><path fill="#d8d8e4" d="M4 5h4v25H4z"/><path fill="#2a2848" d="M12 5h6v25h-6z"/><path fill="#77758f" d="M0 6V3l3-3h13l3 3v3z"/><path fill="#d8d8e4" d="M4 1h4v5H4z"/><path fill="#2a2848" d="M12 0h4l3 3v3h-7z"/></svg>
            <p>将对象放置在此以删除。</p>
          </div>
        </aside>
      </main>

      <footer class="status">
        <button class="out"><svg width="12" height="12" viewBox="0 0 12 12"><path fill="#eef" stroke="#4a4ae0" d="M.5 .5h10v10H.5z"/><path fill="#4a4ae0" d="M0 0h11v3H0zM2 5h6v1H2zM2 7h5v1H2z"/><path fill="#e8a21c" d="M10 6h2v6h-2z"/></svg>输出</button>
        <button class="cubes" aria-label="对象"><svg width="13" height="12" viewBox="0 0 13 12"><path fill="#fff" d="M4 0h5v5H4zM0 6h5v5H0zM8 6h5v5H8z"/><path fill="#4a4ae0" d="M6 0h3v4H7zM2 6h4v3L4 11zM9 6h3v5h-2zM4 3h3v3H5z"/></svg></button>
      </footer>
    `;
  }
}
